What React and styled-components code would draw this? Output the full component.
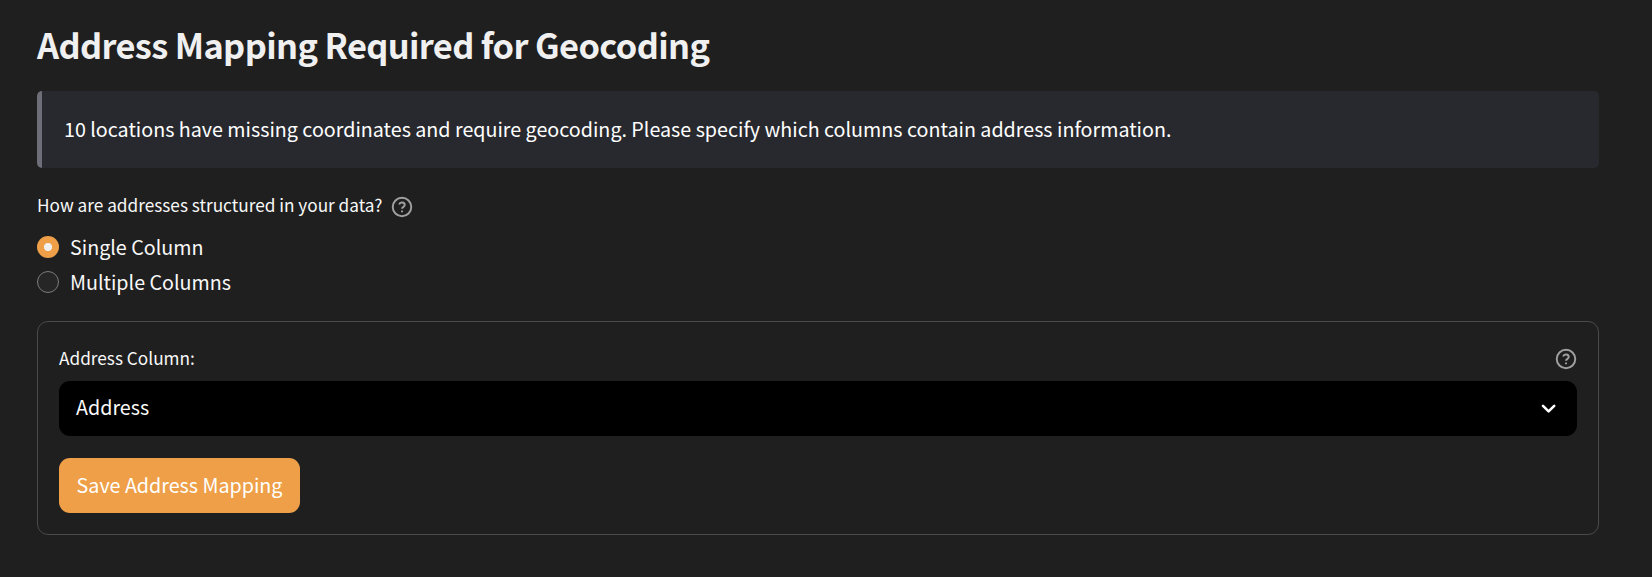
import React, { useState } from "react";
import styled, { createGlobalStyle } from "styled-components";

const GlobalStyle = createGlobalStyle`
  * { box-sizing: border-box; }
  body {
    margin: 0;
    background: #1f1f1f;
    color: #f8f8f8;
    font-family: "Source Sans Pro", "Noto Sans CJK SC", "Noto Sans", sans-serif;
    font-size: 19.71px;
  }
`;

const Page = styled.main`
  height: 577px;
  padding: 17px 53px 0 37px;
  overflow: hidden;
`;

const Title = styled.h2`
  margin: 0 0 20px;
  height: 54px;
  line-height: 54px;
  color: #f0f0f0;
  font-size: 34.4px;
  font-weight: 600;
  letter-spacing: -0.63px;
  white-space: nowrap;
`;

const Notice = styled.div`
  display: flex;
  align-items: center;
  height: 77px;
  padding: 0 22px 2px;
  border-left: 5px solid #6d6e78;
  border-radius: 5px;
  background: #28292e;
  color: #fff;
`;

const Label = styled.div`
  display: flex;
  align-items: center;
  justify-content: ${(p) => (p.$spread ? "space-between" : "flex-start")};
  gap: 9px;
  height: 33px;
  font-size: 17.23px;
`;

const LabelText = styled.span`
  padding-bottom: ${(p) => p.$lift}px;
`;

const Question = styled.section`
  margin-top: 22px;
`;

const Options = styled.div`
  display: grid;
  grid-auto-rows: 35px;
  margin-top: 6px;
`;

const Option = styled.button`
  display: flex;
  align-items: center;
  gap: 11px;
  padding: 0;
  border: 0;
  background: none;
  color: inherit;
  font: inherit;
  cursor: pointer;
`;

const Dot = styled.span`
  flex: none;
  width: 22px;
  height: 22px;
  border-radius: 50%;
  background: ${(p) =>
    p.$on ? "radial-gradient(circle, #f0f0f0 3.7px, #ee9f48 4.5px)" : "#262626"};
  border: ${(p) => (p.$on ? "0" : "1px solid #7c7c7c")};
`;

const Panel = styled.section`
  height: 214px;
  margin-top: 22px;
  padding: 20px 21px;
  border: 1px solid #4a4a4a;
  border-radius: 11px;
`;

const Select = styled.button`
  display: flex;
  align-items: center;
  justify-content: space-between;
  width: 100%;
  height: 55px;
  margin-top: 6px;
  padding: 0 17px 2px;
  border: 0;
  border-radius: 11px;
  background: #000;
  color: #f8f8f8;
  font: inherit;
`;

const SelectValue = styled.span`
  padding-bottom: 2px;
`;

const SaveButton = styled.button`
  display: block;
  width: 241px;
  height: 55px;
  margin-top: 22px;
  padding: 0 0 2px;
  border: 0;
  border-radius: 11px;
  background: #ee9f48;
  color: #fff;
  font: inherit;
  white-space: nowrap;
`;

const HelpSvg = styled.svg`
  flex: none;
  display: block;
`;

const Help = () => (
  <HelpSvg width="22" height="22" viewBox="0 0 24 24" fill="none" stroke="#a0a0a0" strokeWidth="2.1" strokeLinejoin="round">
    <circle cx="12" cy="12" r="10.1" />
    <path d="M8.9 9.2a3.1 2.8 0 0 1 6.1 .7c0 1.9-3 2-3 4.1" />
    <path d="M12 15.7v2.1" />
  </HelpSvg>
);

const Chevron = () => (
  <svg width="22" height="22" viewBox="0 0 22 22" fill="none" stroke="#fff" strokeWidth="2.6" strokeLinecap="round" strokeLinejoin="round">
    <path d="M5 8.8L10.6 14.4L16.2 8.8" />
  </svg>
);

const choices = ["Single Column", "Multiple Columns"];

export default function App() {
  const [choice, setChoice] = useState(choices[0]);
  return (
    <>
      <GlobalStyle />
      <Page>
        <Title>Address Mapping Required for Geocoding</Title>
        <Notice>
          <span>10 locations have missing coordinates and require geocoding. Please specify which columns contain address information.</span>
        </Notice>
        <Question>
          <Label>
            <LabelText $lift={4}>How are addresses structured in your data?</LabelText>
            <Help />
          </Label>
          <Options role="radiogroup">
            {choices.map((c) => (
              <Option key={c} role="radio" aria-checked={c === choice} onClick={() => setChoice(c)}>
                <Dot $on={c === choice} />
                <span>{c}</span>
              </Option>
            ))}
          </Options>
        </Question>
        <Panel>
          <Label $spread>
            <LabelText $lift={3}>Address Column:</LabelText>
            <Help />
          </Label>
          <Select>
            <SelectValue>Address</SelectValue>
            <Chevron />
          </Select>
          <SaveButton>Save Address Mapping</SaveButton>
        </Panel>
      </Page>
    </>
  );
}
